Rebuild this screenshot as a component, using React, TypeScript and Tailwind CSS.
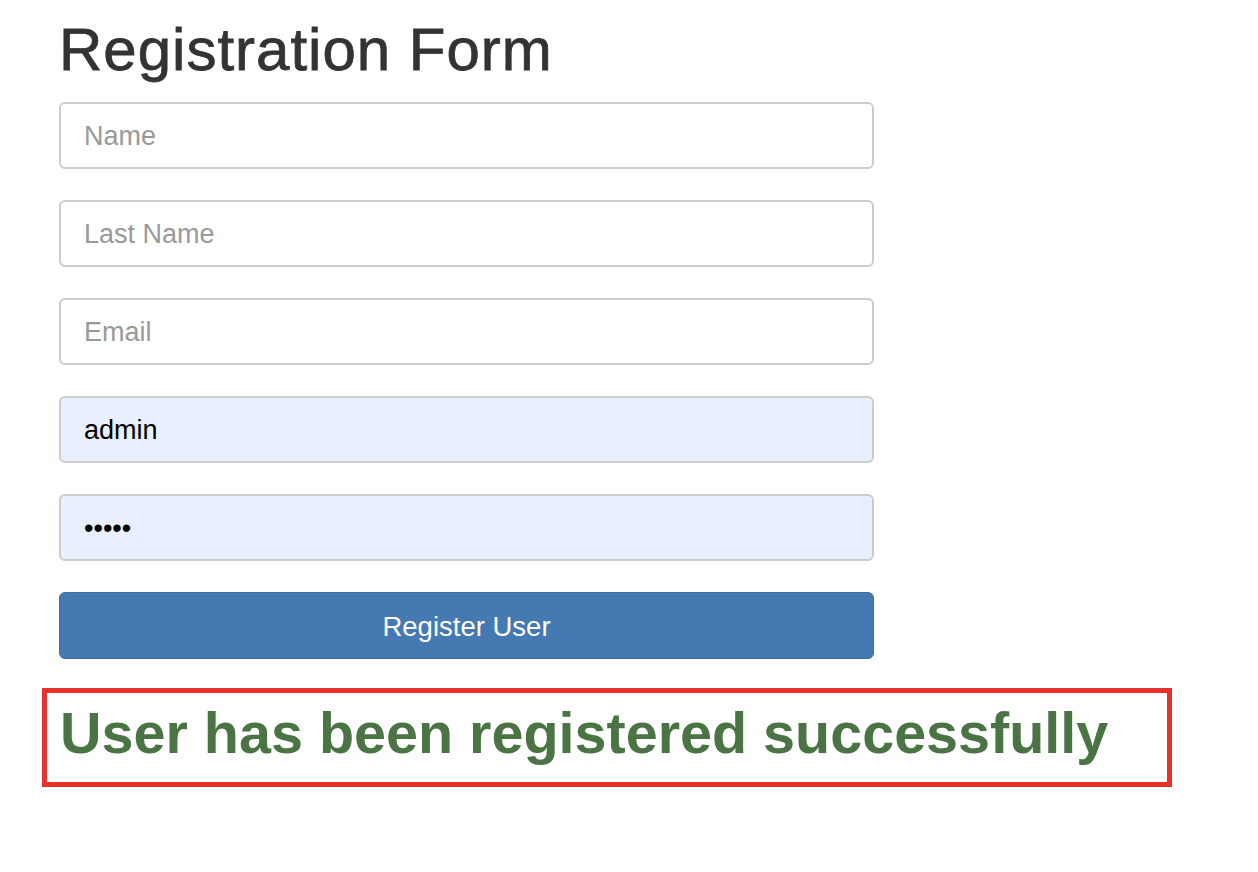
const font = { fontFamily: '"Liberation Sans", Arial, sans-serif' };

const fields = [
  { placeholder: "Name", type: "text", value: "" },
  { placeholder: "Last Name", type: "text", value: "" },
  { placeholder: "Email", type: "email", value: "" },
  { placeholder: "Username", type: "text", value: "admin" },
  { placeholder: "Password", type: "password", value: "admin" },
];

export default function App() {
  return (
    <div className="min-h-screen bg-white pt-[20px]" style={font}>
      <div className="ml-[59px] w-[815px]">
        <h1 className="text-[60px] leading-[60px] font-normal tracking-[1px] text-[#333333] [-webkit-text-stroke:0.8px_#333333]">
          Registration Form
        </h1>
        <form className="mt-[22px] flex flex-col gap-[31px]">
          {fields.map((f) => (
            <input
              key={f.placeholder}
              type={f.type}
              placeholder={f.placeholder}
              defaultValue={f.value}
              className={
                "h-[67px] w-full rounded-[6px] border-2 border-[#cccccc] px-[23px] pt-[2px] text-[27px] text-black outline-none placeholder:text-[#999999] " +
                (f.value ? "bg-[#e8f0fe]" : "bg-white")
              }
            />
          ))}
          <button
            type="button"
            className="h-[67px] w-full rounded-[6px] border border-[#3a6ea5] bg-[#4579b1] pt-[3px] text-[27.5px] text-white"
          >
            Register User
          </button>
        </form>
      </div>
      <div className="mt-[29px] ml-[42px] w-[1130px] border-[5px] border-[#e8312a] pt-[9px] pb-[17px] pl-[13px]">
        <p className="text-[57.5px] leading-[63px] font-bold text-[#4a7443]">
          User has been registered successfully
        </p>
      </div>
    </div>
  );
}
